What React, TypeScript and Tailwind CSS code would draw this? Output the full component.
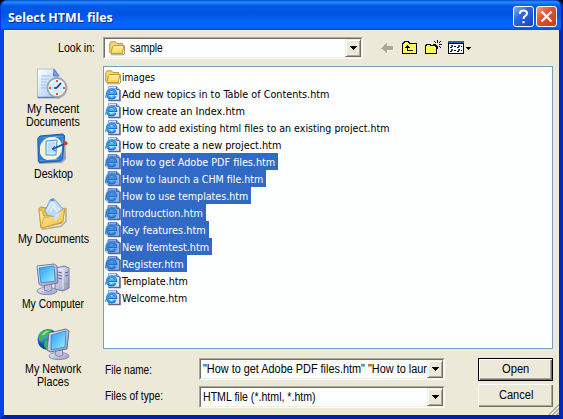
import { useLayoutEffect, useRef, useState } from "react";
import type { ReactNode } from "react";

// One line of text squeezed or stretched to a given pixel width.
function Fit({ text, w, className = "" }: { text: string; w: number; className?: string }) {
  const ref = useRef<HTMLSpanElement>(null);
  const [scale, setScale] = useState(1);
  useLayoutEffect(() => {
    if (ref.current) setScale(w / ref.current.offsetWidth);
  }, [text, w]);
  return (
    <span className={"block shrink-0 whitespace-pre " + className} style={{ width: w }}>
      <span ref={ref} className="inline-block origin-left" style={{ transform: `scaleX(${scale})` }}>
        {text}
      </span>
    </span>
  );
}

function Folder() {
  return (
    <svg width="16" height="16" viewBox="0 0 16 16" className="shrink-0">
      <path d="M2 14.8h12l1.500-1V5.500" fill="none" stroke="#777254" strokeWidth="1" opacity=".7" />
      <path d="M.7 3.500 2 1.800h4.500L8 3.500h5.500v10H1.800L.7 12.300Z" fill="#f6d66d" stroke="#c39a32" />
      <path d="M3.500 6.500 5 5.500h10L13.200 13.500H2Z" fill="#ffe47c" stroke="#c89a28" />
      <path d="M4.500 7h9" stroke="#fff8c4" />
      <path d="M3.500 12h9" stroke="#f1c651" />
    </svg>
  );
}

function HtmlIcon({ selected }: { selected: boolean }) {
  return (
    <svg width="16" height="17" viewBox="0 0 16 17" className="shrink-0">
      <path d="M3.500 15.500v-14h8l3 3v11Z" fill="#dce6ff" stroke="#95a3d4" />
      <path d="M15 5v10.500H3.500" fill="none" stroke="#5d6691" strokeWidth="1.500" />
      <path d="M11.500 1.500v3h3" fill="#a9bcf0" stroke="#5669a8" />
      <circle cx="6.500" cy="8.700" r="3.800" fill="none" stroke="#bfe2ff" strokeWidth="4" />
      <path d="M10.300 11.200A4.300 4.300 0 1 1 10.900 8.700H3.500" fill="none" stroke="#1a6fc9" strokeWidth="2.600" />
      <path d="M9.800 10.900A4 4 0 1 1 10.500 8.400H3.500" fill="none" stroke="#43aff4" strokeWidth="1.300" />
      <path d="M1 13C-.2 10.500 5.500 3.300 11.500 3.800" fill="none" stroke="#3f8fdb" strokeWidth="1.200" />
      {selected && <path d="M3 1h9l3.500 3.500V16H3L0 13V8Z" fill="#316ac5" opacity=".48" />}
    </svg>
  );
}

function DownArrow() {
  return (
    <svg width="7" height="4" viewBox="0 0 7 4" shapeRendering="crispEdges">
      <path d="M0 0h7L3.500 4Z" fill="#000" />
    </svg>
  );
}

function Combo({ children, className }: { children: ReactNode; className: string }) {
  return (
    <div className={"flex h-[22px] shrink-0 border border-t-[#aca899] border-l-[#aca899] border-r-white border-b-white " + className}>
      <div className="flex min-w-0 flex-1 border border-t-[#716f64] border-l-[#716f64] border-r-[#f1efe2] border-b-[#f1efe2] bg-[#fcfffe]">
        <div className="flex min-w-0 flex-1 items-center overflow-hidden">{children}</div>
        <div className="flex w-4 shrink-0 items-center justify-center border border-t-[#f1efe2] border-l-[#f1efe2] border-r-[#716f64] border-b-[#716f64] bg-[#ece9d8] shadow-[inset_1px_1px_0_#fff,inset_-1px_-1px_0_#aca899]">
          <DownArrow />
        </div>
      </div>
    </div>
  );
}

function Defs() {
  return (
    <svg width="0" height="0" className="absolute">
      <defs>
        <linearGradient id="page" x2="1" y2="1"><stop stopColor="#fff" /><stop offset="1" stopColor="#9fc4fa" /></linearGradient>
        <linearGradient id="screen" x2="1" y2="1"><stop stopColor="#259ff2" /><stop offset=".55" stopColor="#68c9ff" /><stop offset="1" stopColor="#b0efff" /></linearGradient>
        <linearGradient id="metal" x2="1" y2="1"><stop stopColor="#f6f7ff" /><stop offset="1" stopColor="#8f91bd" /></linearGradient>
        <linearGradient id="gold" x2="1" y2="1"><stop stopColor="#fff2a2" /><stop offset="1" stopColor="#f1bd42" /></linearGradient>
        <radialGradient id="globe" cx=".3" cy=".3"><stop stopColor="#62b6ff" /><stop offset="1" stopColor="#0744ad" /></radialGradient>
      </defs>
    </svg>
  );
}

function RecentIcon() {
  return (
    <svg width="32" height="32" viewBox="0 0 32 32">
      <path d="M1 29.500h22V7l-6-6H1Z" fill="url(#page)" />
      <path d="M.5 29V1H17" fill="none" stroke="#aebee5" />
      <path d="M.5 29.500h22" stroke="#5279c0" strokeWidth="1.500" />
      <path d="m17 1-.5 7H22Z" fill="#6ea2e5" stroke="#4b80c9" />
      <path d="M4 8h10M4 11h8M4 14h6M4 17h5M4 20h5" stroke="#9bbbed" />
      <circle cx="20.500" cy="20.500" r="10" fill="#777" opacity=".45" />
      <circle cx="19.800" cy="19.500" r="9.500" fill="#e9f6ff" stroke="#9aa5b5" strokeWidth="1.800" />
      <circle cx="19.800" cy="19.500" r="7.600" fill="#d5eeff" stroke="#fff" />
      <path d="m24 15-4.500 5H17" fill="none" stroke="#15345f" strokeWidth="1.600" />
      <path d="M19 12h2v2h-2zM19 25h2v2h-2zM12 19h2v2h-2zM26 19h2v2h-2z" fill="#e85522" />
    </svg>
  );
}

function DesktopIcon() {
  return (
    <svg width="32" height="32" viewBox="0 0 32 32">
      <path d="m3 5 25-3 1 24-4 4-23 1Z" fill="#788194" opacity=".7" />
      <path d="M.8 5.500 3 3l23-2 1.500 2-2 23-2 2-21 1.500-1.200-1Z" fill="#2d7bd8" stroke="#1559b5" />
      <path d="m3 5 23-2-2 23-21 1.500Z" fill="#faf3cf" />
      <path d="m3 5 9-1Q4 7 3 14ZM26 3l-1 9Q24 6 18 4ZM3 20q1 5 7 7l-7 .5ZM24.500 19q-2 5-6 7.300l5.500-.3Z" fill="#1e83df" />
      <path d="m9 8 11-1-1 15H9Z" fill="#d8eeff" stroke="#4595dd" />
      <path d="m11 10 7-1-1 11h-6Z" fill="#b9defc" />
      <path d="m16 16 11-5" stroke="#264d87" strokeWidth="1.800" />
      <path d="m15 16 3-3m-3 3 4 2" stroke="#315e94" />
      <circle cx="28.500" cy="10.300" r="2" fill="#d43a20" />
    </svg>
  );
}

function DocumentsIcon() {
  return (
    <svg width="32" height="32" viewBox="0 0 32 32">
      <path d="m5 31.300 19-3 5-5V10" fill="none" stroke="#8d866b" strokeWidth="1.500" opacity=".6" />
      <path d="M2 10.500 4 9l5 1 2 3 14-3 3 1-3 14-21 5Z" fill="#edc250" stroke="#c3953a" />
      <path d="M8 13 13 2l4-1.500L26 11l-7 12-8-5Z" fill="#b9dbff" stroke="#78a8e4" />
      <path d="m10 13 5-9 8 8M13 14l3-6 5 6" fill="none" stroke="#eef8ff" strokeWidth="1.300" />
      <path d="m13 1.500 3-1 2 2-4 1Z" fill="#4993e3" />
      <path d="m2 12 3 .5L7 18l11-1 9.500-7L26 24 4 30Z" fill="url(#gold)" stroke="#d3a13c" />
      <path d="m14 17 10-3-5 9Z" fill="#c4e5ff" />
      <path d="m4 29.500 3-10 11-1.500" fill="none" stroke="#dca93d" />
    </svg>
  );
}

function ComputerIcon() {
  return (
    <svg width="34" height="33" viewBox="0 0 34 33">
      <path d="m20 5 8-2 5 2v20l-6 3-8-2Z" fill="url(#metal)" stroke="#7779a3" />
      <path d="m22 6 5 1v19" fill="none" stroke="#e8e9fa" />
      <path d="m22 9 4 1m-4 2 4 1m-4 2 4 1m3-6 3-1m-3 4 3-1" stroke="#5a5e94" />
      <circle cx="30" cy="21" r="1.200" fill="#5edb43" />
      <ellipse cx="11" cy="28" rx="10" ry="3.600" fill="url(#metal)" stroke="#8b8db3" />
      <path d="m9 20 6-1 1 8q-4 3-8 0Z" fill="#bec0e0" stroke="#8283ad" />
      <path d="M1 3 18 1l3 2 1 17-16 3-3-2Z" fill="url(#metal)" stroke="#7477a3" />
      <path d="m3 5 15-2 1 15-14 2Z" fill="url(#screen)" stroke="#2378bd" strokeWidth=".7" />
    </svg>
  );
}

function NetworkIcon() {
  return (
    <svg width="33" height="33" viewBox="0 0 33 33">
      <circle cx="11" cy="11.500" r="10.500" fill="url(#globe)" />
      <path d="m2 8 4-5 6-2 3 2-5 5-3 1-2 5-3-2ZM8 12l5 2 1 4-4 4-3-4Z" fill="#38bb4c" />
      <path d="m4 7 5-4 3 0-5 4Z" fill="#99e878" />
      <ellipse cx="22" cy="28" rx="10" ry="3.600" fill="url(#metal)" stroke="#8b8db3" />
      <path d="m19 20 6-1 1 8q-4 3-8 0Z" fill="#c3c3df" stroke="#8889ad" />
      <path d="m12 5 17-4 3 2-2 18-17 3-3-2Z" fill="url(#metal)" stroke="#68708f" />
      <path d="m14 7 15-4-1 16-14 3Z" fill="url(#screen)" stroke="#2378bd" strokeWidth=".7" />
    </svg>
  );
}

const files: { name: string; w: number; selected?: boolean }[] = [
  { name: "Add new topics in to Table of Contents.htm", w: 208 },
  { name: "How create an Index.htm", w: 123 },
  { name: "How to add existing html files to an existing project.htm", w: 267 },
  { name: "How to create a new project.htm", w: 159 },
  { name: "How to get Adobe PDF files.htm", w: 153, selected: true },
  { name: "How to launch a CHM file.htm", w: 141, selected: true },
  { name: "How to use templates.htm", w: 126, selected: true },
  { name: "Introduction.htm", w: 81, selected: true },
  { name: "Key features.htm", w: 84, selected: true },
  { name: "New Itemtest.htm", w: 87, selected: true },
  { name: "Register.htm", w: 62, selected: true },
  { name: "Template.htm", w: 66 },
  { name: "Welcome.htm", w: 65 },
];

const places: { icon: ReactNode; lines: { text: string; w: number }[] }[] = [
  { icon: <RecentIcon />, lines: [{ text: "My Recent", w: 52 }, { text: "Documents", w: 54 }] },
  { icon: <DesktopIcon />, lines: [{ text: "Desktop", w: 39 }] },
  { icon: <DocumentsIcon />, lines: [{ text: "My Documents", w: 71 }] },
  { icon: <ComputerIcon />, lines: [{ text: "My Computer", w: 62 }] },
  { icon: <NetworkIcon />, lines: [{ text: "My Network", w: 56 }, { text: "Places", w: 32 }] },
];

function Toolbar() {
  return (
    <svg width="92" height="18" viewBox="0 0 92 18" shapeRendering="crispEdges" className="ml-[17px] mt-[3px] shrink-0">
      <path d="M2 9h1V8h1V7h1V6h1V5h1V4h1v3h6v4H8v3H7v-1H6v-1H5v-1H4v-1H3V9Z" fill="#fff" />
      <path d="M1 8h1V7h1V6h1V5h1V4h1V3h1v3h6v4H7v3H6v-1H5v-1H4v-1H3V9H1Z" fill="#aca899" />
      <path d="M22.500 13.500v-10h1v-1h1v-1h4v1h1v1h7v10Z" fill="#ffff4d" stroke="#000" />
      <path d="M27 5h1v1h1v1h1v1h-2v2h5v1h-6V8h-2V7h1V6h1Z" fill="#000" />
      <path d="M45.500 13.500v-8h1v-1h4v1h6v8Z" fill="#ffff4d" stroke="#000" />
      <path d="M57 0h1v3h-1zM57 6h1v3h-1zM53 4h3v1h-3zM59 4h3v1h-3zM54 1h1v1h1v1h-1V2h-1zM60 1h1v1h-1v1h-1V2h1zM55 6h1v1h-1zM59 6h1v1h1v1h-1V7h-1z" fill="#000" />
      <rect x="68.500" y="1.500" width="15" height="12" fill="#fff" stroke="#000" />
      <rect x="68" y="1" width="16" height="2" fill="#1f5fae" />
      <path d="M68 3h16v1H68z" fill="#000" />
      <path d="M71 5h2v2h-2zM78 5h2v2h-2zM71 9h2v2h-2zM78 9h2v2h-2z" fill="#2848b0" />
      <path d="M70 7h2v1h-2zM77 7h2v1h-2zM70 11h2v1h-2zM77 11h2v1h-2z" fill="#000060" />
      <path d="M74 6h2v1h-2zM81 6h1v1h-1zM74 10h2v1h-2zM81 10h1v1h-1z" fill="#000" />
      <path d="M86 7h5v1h-5zM87 8h3v1h-3zM88 9h1v1h-1z" fill="#000" />
    </svg>
  );
}

const ui = "font-['Liberation_Sans',Arial,sans-serif] text-[12px] leading-[13px]";

export default function App() {
  return (
    <div className={"relative flex h-[419px] w-[563px] flex-col overflow-hidden bg-black text-black " + ui}>
      <Defs />
      <header className="flex h-[30px] shrink-0 items-center rounded-t-[7px] bg-[linear-gradient(180deg,#0145cc_0px,#166ee9_1px,#2f8cff_2px,#0873f8_4px,#0058e6_6px,#0054e3_14px,#005bea_18px,#0066ff_22px,#0066ff_27px,#0050d8_30px)] pl-2 pr-[6px] shadow-[inset_1px_0_#0831d9,inset_-2px_0_#0025b3]">
        <Fit text="Select HTML files" w={105} className="mt-[3px] font-['Open_Sans',sans-serif] text-[13px] font-bold leading-4 text-white [text-shadow:1px_1px_0_#0a2a88]" />
        <div className="ml-auto mt-[3px] flex gap-[2px]">
          <div className="flex size-[21px] items-center justify-center rounded-[3px] border border-white bg-[linear-gradient(135deg,#8aacf6,#3065dc_40%,#1645bf)]">
            <svg width="19" height="19" viewBox="0 0 19 19" fill="none" stroke="#fff" strokeWidth="2">
              <path d="M6 7V6q0-2.500 3.500-2.500T13 6.300q0 1.600-1.700 2.600T9.500 12M9.500 14v2.200" />
            </svg>
          </div>
          <div className="flex size-[21px] items-center justify-center rounded-[3px] border border-white bg-[linear-gradient(135deg,#f2a083,#e15330_40%,#c33b13)]">
            <svg width="19" height="19" viewBox="0 0 19 19" stroke="#fff" strokeWidth="2.400">
              <path d="m4.500 4.500 10 10m0-10-10 10" />
            </svg>
          </div>
        </div>
      </header>
      <main className="flex min-h-0 flex-1 border-x-4 border-b-4 bg-[#ece9d8] [border-bottom-color:#0020a8] [border-left-color:#0444e5] [border-right-color:#0028bf]">
        <aside className="flex w-[99px] shrink-0 flex-col">
          <div className="flex h-[38px] shrink-0 items-start justify-end pr-2 pt-[12px]">
            <Fit text="Look in:" w={37} />
          </div>
          {places.map((p) => (
            <div key={p.lines[0].text} className="flex h-[65px] shrink-0 flex-col items-center pr-px">
              <div className="flex h-[35px] shrink-0 items-start">{p.icon}</div>
              {p.lines.map((l) => (
                <Fit key={l.text} text={l.text} w={l.w} />
              ))}
            </div>
          ))}
        </aside>
        <section className="flex min-w-0 flex-1 flex-col pt-[7px]">
          <div className="flex h-[29px] shrink-0 items-start">
            <Combo className="w-[260px]">
              <div className="flex items-center gap-[5px] pl-1">
                <Folder />
                <Fit text="sample" w={33} />
              </div>
            </Combo>
            <Toolbar />
          </div>
          <div className="h-[283px] w-[450px] shrink-0 border border-[#7f9db9] bg-[#fcfffe] pl-px pt-px font-['DejaVu_Sans_Condensed','DejaVu_Sans',sans-serif] text-[11px] leading-[17px] [font-stretch:condensed]">
            <div className="flex h-[17px] items-center">
              <Folder />
              <Fit text="images" w={33} className="ml-px pt-px" />
            </div>
            {files.map((f) => (
              <div key={f.name} className="flex h-[17px]">
                <HtmlIcon selected={!!f.selected} />
                <div className={"flex h-[17px] pl-px pr-[3px] pt-px " + (f.selected ? "bg-[#316ac5] text-white" : "")}>
                  <Fit text={f.name} w={f.w} />
                </div>
              </div>
            ))}
          </div>
          <div className="flex h-[66px] shrink-0 pt-[9px]">
            <div className="flex w-[96px] shrink-0 flex-col gap-[13px] pl-[2px] pt-[6px]">
              <Fit text="File name:" w={47} />
              <Fit text="Files of type:" w={58} />
            </div>
            <div className="flex flex-col gap-[6px]">
              <Combo className="w-[246px]">
                <Fit text={'"How to get Adobe PDF files.htm" "How to laur'} w={224} className="ml-[2px]" />
              </Combo>
              <Combo className="w-[246px]">
                <Fit text="HTML file (*.html, *.htm)" w={113} className="ml-[2px]" />
              </Combo>
            </div>
            <div className="ml-[33px] flex flex-col gap-[3px]">
              <div className="border border-black">
                <div className="flex h-[21px] w-[73px] items-center justify-center bg-[#ece9d8] shadow-[inset_1px_1px_0_#fff,inset_-1px_-1px_0_#716f64,inset_-2px_-2px_0_#aca899]">
                  <Fit text="Open" w={27} />
                </div>
              </div>
              <div className="flex h-[23px] w-[75px] items-center justify-center bg-[#ece9d8] shadow-[inset_1px_1px_0_#fff,inset_-1px_-1px_0_#716f64,inset_-2px_-2px_0_#aca899]">
                <Fit text="Cancel" w={34} />
              </div>
            </div>
          </div>
        </section>
      </main>
      <svg width="12" height="12" viewBox="0 0 12 12" className="absolute bottom-1 right-1">
        <path d="M0 12 12 0M4 12 12 4M8 12 12 8" stroke="#fff" strokeWidth="1.200" />
        <path d="M1.500 12 12 1.500M5.500 12 12 5.500M9.500 12 12 9.500" stroke="#aca899" strokeWidth="1.600" />
      </svg>
    </div>
  );
}
